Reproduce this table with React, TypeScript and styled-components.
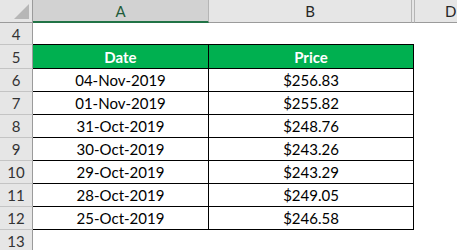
import React from "react";
import styled, { createGlobalStyle } from "styled-components";

const GlobalStyle = createGlobalStyle`
  html, body { margin: 0; padding: 0; background: #ffffff; overflow: hidden; }
  body { font-family: Lato, "Open Sans", "Liberation Sans", sans-serif; }
`;

const Sheet = styled.div`
  width: 457px;
  height: 250px;
  overflow: hidden;
  display: flex;
  flex-direction: column;
  background: #ffffff;
`;

const HeaderRow = styled.div`
  display: flex;
  height: 23px;
  flex: none;
`;

const Corner = styled.div`
  position: relative;
  width: 33px;
  flex: none;
  box-sizing: border-box;
  background: #e6e6e6;
  border-right: 1px solid #9b9b9b;
  border-bottom: 1px solid #9b9b9b;
`;

const CornerTriangle = styled.div`
  position: absolute;
  right: 3px;
  bottom: 3px;
  width: 0;
  height: 0;
  border-left: 15px solid transparent;
  border-bottom: 15px solid #b7b7b7;
`;

const ColHead = styled.div<{ $w: number; $selected?: boolean; $noRight?: boolean }>`
  width: ${(p) => p.$w}px;
  flex: none;
  box-sizing: border-box;
  display: flex;
  align-items: center;
  justify-content: center;
  font-size: 15px;
  color: ${(p) => (p.$selected ? "#1f5c3a" : "#262626")};
  background: ${(p) => (p.$selected ? "#d2d2d2" : "#e6e6e6")};
  border-right: ${(p) => (p.$noRight ? "none" : "1px solid #b5b5b5")};
  border-bottom: ${(p) => (p.$selected ? "2px solid #217346" : "1px solid #9b9b9b")};
  padding-top: ${(p) => (p.$selected ? "1px" : "0")};
`;

const HiddenGap = styled.div`
  width: 3px;
  flex: none;
  box-sizing: border-box;
  background: #e6e6e6;
  border-right: 1px solid #b5b5b5;
  border-bottom: 1px solid #9b9b9b;
`;

const ColHeadD = styled.div`
  flex: 1;
  box-sizing: border-box;
  display: flex;
  align-items: center;
  justify-content: flex-start;
  padding-left: 30px;
  font-size: 15px;
  color: #262626;
  background: #e6e6e6;
  border-bottom: 1px solid #9b9b9b;
`;

const Row = styled.div<{ $h: number }>`
  display: flex;
  height: ${(p) => p.$h}px;
  flex: none;
`;

const RowHead = styled.div`
  width: 33px;
  flex: none;
  box-sizing: border-box;
  display: flex;
  align-items: center;
  justify-content: center;
  font-size: 15px;
  color: #333333;
  background: #e6e6e6;
  border-right: 1px solid #9b9b9b;
  border-bottom: 1px solid #c4c4c4;
`;

const Cell = styled.div<{ $w: number; $kind: "blank" | "edge" | "head" | "data" }>`
  width: ${(p) => p.$w}px;
  flex: none;
  box-sizing: border-box;
  display: flex;
  align-items: center;
  justify-content: center;
  font-size: 15px;
  color: #000000;
  background: ${(p) => (p.$kind === "head" ? "#00b050" : "#ffffff")};
  font-weight: ${(p) => (p.$kind === "head" ? 700 : 400)};
  ${(p) => (p.$kind === "head" ? "color: #ffffff;" : "")}
  border-bottom: ${(p) => (p.$kind === "blank" ? "none" : "1px solid #000000")};
  border-right: ${(p) => (p.$kind === "head" || p.$kind === "data" ? "1px solid #000000" : "none")};
`;

const Rest = styled.div`
  flex: 1;
  background: #ffffff;
`;

const data: [string, string][] = [
  ["04-Nov-2019", "$256.83"],
  ["01-Nov-2019", "$255.82"],
  ["31-Oct-2019", "$248.76"],
  ["30-Oct-2019", "$243.26"],
  ["29-Oct-2019", "$243.29"],
  ["28-Oct-2019", "$249.05"],
  ["25-Oct-2019", "$246.58"],
];

export default function App() {
  return (
    <>
      <GlobalStyle />
      <Sheet>
        <HeaderRow>
          <Corner>
            <CornerTriangle />
          </Corner>
          <ColHead $w={176} $selected>
            A
          </ColHead>
          <ColHead $w={203}>B</ColHead>
          <HiddenGap />
          <ColHeadD>D</ColHeadD>
        </HeaderRow>
        <Row $h={22}>
          <RowHead>4</RowHead>
          <Cell $w={176} $kind="edge" />
          <Cell $w={205} $kind="edge" />
          <Rest />
        </Row>
        <Row $h={24}>
          <RowHead>5</RowHead>
          <Cell $w={176} $kind="head">Date</Cell>
          <Cell $w={205} $kind="head">Price</Cell>
          <Rest />
        </Row>
        {data.map(([d, p], i) => (
          <Row $h={23} key={d}>
            <RowHead>{i + 6}</RowHead>
            <Cell $w={176} $kind="data">{d}</Cell>
            <Cell $w={205} $kind="data">{p}</Cell>
            <Rest />
          </Row>
        ))}
        <Row $h={22}>
          <RowHead>13</RowHead>
          <Cell $w={176} $kind="blank" />
          <Cell $w={205} $kind="blank" />
          <Rest />
        </Row>
      </Sheet>
    </>
  );
}
